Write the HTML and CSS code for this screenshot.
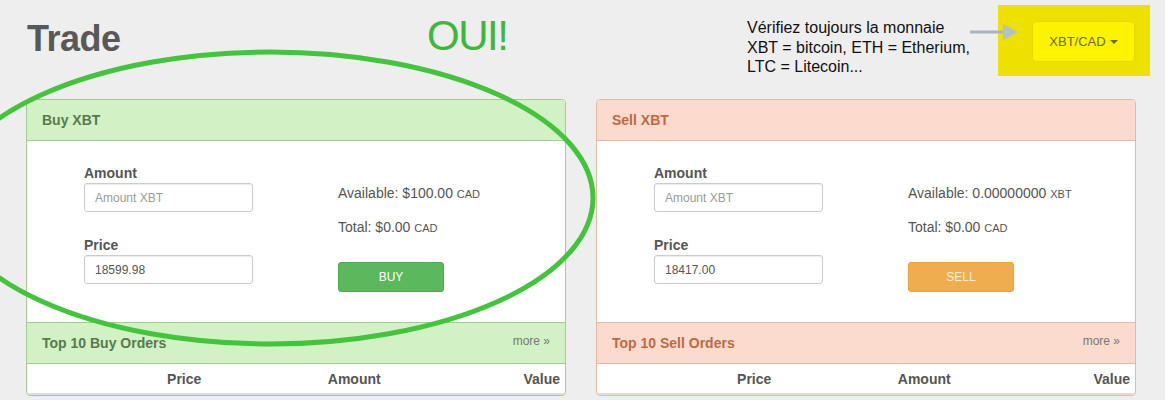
FILE: index.html
```html
<!DOCTYPE html>
<html lang="fr">
<head>
<meta charset="utf-8">
<title>Trade</title>
<link rel="stylesheet" href="styles.css">
</head>
<body>
<header class="top">
  <h1 class="title">Trade</h1>
  <div class="oui">OUI!</div>
  <p class="note">Vérifiez toujours la monnaie<br>XBT = bitcoin, ETH = Etherium,<br>LTC = Litecoin...</p>
  <div class="hl">
    <button class="dd" type="button">XBT/CAD <span class="caret"></span></button>
  </div>
  <svg class="arrow" width="52" height="20" viewBox="0 0 52 20">
    <line x1="2" y1="10" x2="38" y2="10" stroke="#a9b4c0" stroke-width="3"/>
    <polygon points="35,2 50,10 35,18" fill="#b3c1cd"/>
  </svg>
</header>

<main class="panels">
  <section class="panel buy">
    <div class="panel-head">Buy XBT</div>
    <div class="panel-body">
      <div class="form-col">
        <div class="field">
          <label class="field-label">Amount</label>
          <input class="input" type="text" placeholder="Amount XBT">
        </div>
        <div class="field">
          <label class="field-label">Price</label>
          <input class="input" type="text" value="18599.98">
        </div>
      </div>
      <div class="info-col">
        <div class="info">Available: $100.00 <span class="unit">CAD</span></div>
        <div class="info total">Total: $0.00 <span class="unit">CAD</span></div>
        <button class="btn btn-buy" type="button">BUY</button>
      </div>
    </div>
    <div class="panel-head orders-head">Top 10 Buy Orders <span class="more">more »</span></div>
    <table class="orders">
      <thead><tr><th>Price</th><th>Amount</th><th>Value</th></tr></thead>
    </table>
  </section>

  <section class="panel sell">
    <div class="panel-head">Sell XBT</div>
    <div class="panel-body">
      <div class="form-col">
        <div class="field">
          <label class="field-label">Amount</label>
          <input class="input" type="text" placeholder="Amount XBT">
        </div>
        <div class="field">
          <label class="field-label">Price</label>
          <input class="input" type="text" value="18417.00">
        </div>
      </div>
      <div class="info-col">
        <div class="info">Available: 0.00000000 <span class="unit">XBT</span></div>
        <div class="info total">Total: $0.00 <span class="unit">CAD</span></div>
        <button class="btn btn-sell" type="button">SELL</button>
      </div>
    </div>
    <div class="panel-head orders-head">Top 10 Sell Orders <span class="more">more »</span></div>
    <table class="orders">
      <thead><tr><th>Price</th><th>Amount</th><th>Value</th></tr></thead>
    </table>
  </section>
</main>

<svg class="circle" width="1165" height="400" viewBox="0 0 1165 400">
  <ellipse cx="270" cy="198" rx="323" ry="146" fill="none" stroke="#42c43b" stroke-width="5"/>
</svg>
</body>
</html>
```
FILE: styles.css
```css
* { box-sizing: border-box; }

body {
  margin: 0;
  width: 1165px;
  height: 400px;
  overflow: hidden;
  position: relative;
  background: #eeeeee;
  font-family: "Liberation Sans", Arial, sans-serif;
  color: #555;
}

.top {
  position: relative;
  display: grid;
  grid-template-columns: 400px 320px 251px 152px;
  align-items: start;
  height: 99px;
  padding-left: 27px;
}

.title {
  margin: 21px 0 0;
  font-size: 36px;
  line-height: 36px;
  font-weight: bold;
  color: #585858;
  letter-spacing: -0.5px;
}

.oui {
  margin-top: 15px;
  font-size: 42px;
  line-height: 42px;
  color: #3cb83a;
  letter-spacing: -1.5px;
}

.note {
  margin: 18px 0 0;
  font-size: 16px;
  line-height: 19.5px;
  color: #111;
  white-space: nowrap;
}

.hl {
  margin-top: 5px;
  height: 71px;
  background: #eee102;
  padding: 16px 15px 14px 34px;
}

.dd {
  width: 103px;
  height: 41px;
  background: #fbf300;
  border: 1px solid #e4da00;
  border-radius: 4px;
  font-family: "Liberation Sans", Arial, sans-serif;
  font-size: 13px;
  color: #6e6b2c;
  display: flex;
  align-items: center;
  justify-content: center;
  gap: 4px;
  padding: 0;
}

.caret {
  width: 0;
  height: 0;
  border-top: 4px solid #6e6b2c;
  border-left: 4px solid transparent;
  border-right: 4px solid transparent;
}

.arrow {
  position: absolute;
  left: 968px;
  top: 22px;
}

.panels {
  display: grid;
  grid-template-columns: 540px 540px;
  column-gap: 30px;
  padding-left: 26px;
}

.panel {
  background: #fff;
  border: 1px solid #a3cc93;
  border-radius: 4px;
  overflow: hidden;
}

.panel-head {
  height: 41px;
  display: flex;
  align-items: center;
  justify-content: space-between;
  padding: 0 15px;
  background: #d2f1c4;
  border-bottom: 1px solid #a3cc93;
  font-size: 14px;
  font-weight: bold;
  color: #587a4e;
}

.orders-head {
  height: 42px;
  border-top: 1px solid #a3cc93;
}

.more {
  font-weight: normal;
  font-size: 12px;
  color: #777;
  margin-top: -4px;
}

.panel-body {
  height: 181px;
  display: grid;
  grid-template-columns: 254px 1fr;
  padding: 22px 0 0 57px;
}

.field + .field { margin-top: 23px; }

.field-label {
  display: block;
  font-size: 14px;
  line-height: 20px;
  font-weight: bold;
  color: #555;
}

.input {
  display: block;
  width: 169px;
  height: 29px;
  margin: 0;
  border: 1px solid #ccc;
  border-radius: 3px;
  padding: 0 10px;
  font-family: "Liberation Sans", Arial, sans-serif;
  font-size: 12px;
  color: #555;
  box-shadow: inset 0 1px 1px rgba(0, 0, 0, 0.075);
}

.input::placeholder { color: #999; }

.info-col { padding-top: 20px; }

.info {
  font-size: 14px;
  line-height: 20px;
  color: #555;
}

.info.total { margin-top: 13px; }

.unit { font-size: 11px; }

.btn {
  display: block;
  margin-top: 24px;
  width: 106px;
  height: 30px;
  border-radius: 3px;
  font-family: "Liberation Sans", Arial, sans-serif;
  font-size: 12px;
  color: #fff;
  padding: 0;
}

.btn-buy { background: #5cb85c; border: 1px solid #4cae4c; }
.btn-sell { background: #f0ad4e; border: 1px solid #eea236; color: #fdf0d8; }

.orders {
  width: 100%;
  border-collapse: collapse;
  table-layout: fixed;
}

.orders th {
  width: 33.333%;
  height: 30px;
  padding: 0 5px;
  text-align: right;
  font-size: 14px;
  font-weight: bold;
  color: #555;
  border-bottom: 2px solid #ddd;
}

.sell { border-color: #e7b9a2; }
.sell .panel-head {
  background: #fbdbce;
  border-color: #e7b9a2;
  color: #c0693d;
}

.circle {
  position: absolute;
  left: 0;
  top: 0;
  pointer-events: none;
}
```
